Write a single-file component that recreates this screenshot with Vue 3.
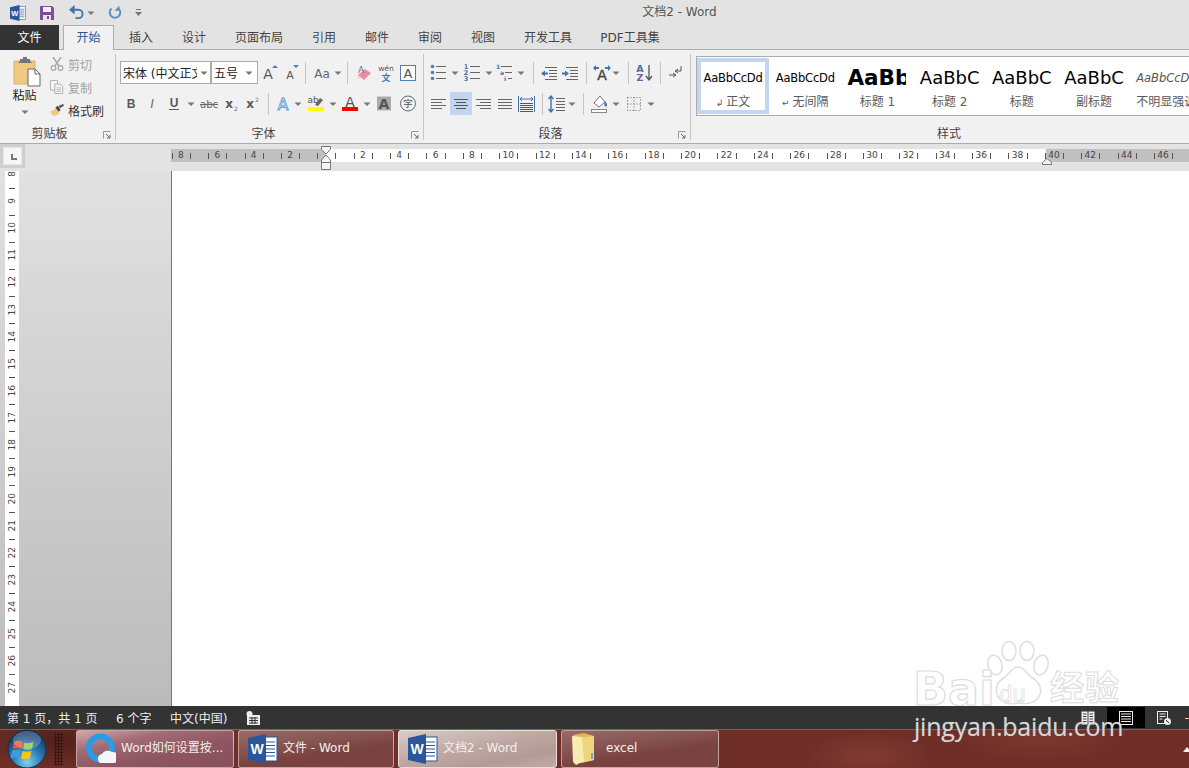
<script setup>
const tabs = [
  { t: '插入', w: 54 }, { t: '设计', w: 52 }, { t: '页面布局', w: 78 }, { t: '引用', w: 52 },
  { t: '邮件', w: 54 }, { t: '审阅', w: 52 }, { t: '视图', w: 54 }, { t: '开发工具', w: 76 }, { t: 'PDF工具集', w: 88 }
]
const c = (w) => ({ w, i: 'caret' })
const s = (w) => ({ w, sep: true })
const font1 = [
  { w: 21, i: 'grow' }, { w: 21, i: 'shrink' }, s(9), { w: 23, i: 'case' }, c(9), s(11),
  { w: 22, i: 'eraser' }, { w: 21, i: 'wen' }, { w: 23, i: 'abox' }
]
const font2 = [
  { w: 21, i: 'bold' }, { w: 22, i: 'ital' }, { w: 22, i: 'under' }, c(12), { w: 23, i: 'strike' },
  { w: 21, i: 'sub' }, { w: 22, i: 'sup' }, s(10), { w: 20, i: 'effect' }, c(10),
  { w: 26, i: 'hilite' }, c(8), { w: 26, i: 'fcolor' }, c(8), { w: 26, i: 'ashade' }, { w: 22, i: 'circle' }
]
const para1 = [
  { w: 22, i: 'bullets' }, c(12), { w: 22, i: 'numbers' }, c(12), { w: 20, i: 'multi' }, c(12), s(12),
  { w: 20, i: 'outdent' }, { w: 22, i: 'indent' }, s(10), { w: 22, i: 'asian' }, c(6), s(18),
  { w: 14, i: 'sort' }, s(18), { w: 12, i: 'pilcrow' }
]
const para2 = [
  { w: 22, i: 'alignl' }, { w: 22, i: 'alignc', on: true }, { w: 22, i: 'alignr' }, { w: 22, i: 'alignj' },
  { w: 22, i: 'alignd' }, s(8), { w: 22, i: 'spacing' }, c(8), s(14), { w: 20, i: 'fill' }, c(12),
  { w: 24, i: 'borders' }, c(10)
]
const styles = [
  { t: 'AaBbCcDd', l: '正文', m: '↲', k: 'sm', on: true },
  { t: 'AaBbCcDd', l: '无间隔', m: '↵', k: 'sm' },
  { t: 'AaBbCcDd', l: '标题 1', k: 'h1' },
  { t: 'AaBbC', l: '标题 2', k: 'h2' },
  { t: 'AaBbC', l: '标题', k: 'h2' },
  { t: 'AaBbC', l: '副标题', k: 'h2' },
  { t: 'AaBbCcDd', l: '不明显强调', k: 'em' }
]
const hcells = []
for (let n = -8; n <= 47; n++) hcells.push(n % 2 === 0 && n !== 0 ? Math.abs(n) : '')
const vcells = []
for (let n = 8; n <= 27; n++) vcells.push(n)
const tasks = [
  { t: 'Word如何设置按...', k: 'pink', i: 'browser', w: 158, ic: 30, gap: 5 },
  { t: '文件 - Word', k: 'plain', i: 'word', w: 156, ic: 30, gap: 5 },
  { t: '文档2 - Word', k: 'active', i: 'word', w: 159, ic: 30, gap: 5 },
  { t: 'excel', k: 'plain', i: 'folder', w: 158, ic: 26, gap: 9 }
]
</script>

<template>
  <div class="app">
    <svg class="defs" width="0" height="0" aria-hidden="true">
      <symbol id="word" viewBox="0 0 30 30">
        <rect x="15" y="3" width="14" height="24" fill="#fff" stroke="#2b579a" />
        <path d="M18 8h9M18 11.500h9M18 15h9M18 18.500h9M18 22h9" stroke="#2b579a" stroke-width="1.200" />
        <path d="M0 4 18 0v30L0 26z" fill="#2b579a" />
        <text x="9" y="20" text-anchor="middle" font-size="14" font-weight="700" fill="#fff" font-family="Liberation Sans">W</text>
      </symbol>
      <symbol id="save" viewBox="0 0 14 14">
        <path d="M0 0h12l2 2v12H0z" fill="#7d4e9e" />
        <rect x="3" y="1" width="8" height="5" fill="#f3eef7" />
        <rect x="3" y="9" width="8" height="5" fill="#e9e1ef" />
        <rect x="7" y="10" width="2" height="3" fill="#7d4e9e" />
      </symbol>
      <symbol id="undo" viewBox="0 0 16 16">
        <path d="M3 5h7a4.500 4.500 0 0 1 0 9H7" fill="none" stroke="#3f74ad" stroke-width="2" />
        <path d="M6 0v10L0 5z" fill="#3f74ad" />
      </symbol>
      <symbol id="redo" viewBox="0 0 16 16">
        <path d="M4 3.500a6 6 0 1 0 8 0" fill="none" stroke="#5b8fc4" stroke-width="2.200" />
        <path d="M13 0v6H7.500z" fill="#5b8fc4" />
      </symbol>
      <symbol id="qatm" viewBox="0 0 7 7">
        <path d="M1 0h5v1H1zM0 3h7L3.500 7z" fill="#777" />
      </symbol>
      <symbol id="caret" viewBox="0 0 20 20">
        <path d="M6.500 8.500h7L10 12z" fill="#777" />
      </symbol>
      <symbol id="paste" viewBox="0 0 28 30">
        <path d="M1 4h21v23H1z" fill="#efc981" stroke="#d9b06a" />
        <path d="M7 4V2h3V0h4v2h3v2l2 2H5z" fill="#757575" />
        <path d="M15 12h7l5 5v12H15z" fill="#fff" stroke="#666" />
        <path d="M22 12v5h5" fill="none" stroke="#666" />
      </symbol>
      <symbol id="scissors" viewBox="0 0 14 14">
        <path d="M3 0l6 9M11 0 5 9" stroke="#a9a9a9" stroke-width="1.500" fill="none" />
        <circle cx="3.500" cy="11" r="2.300" fill="none" stroke="#a9a9a9" stroke-width="1.300" />
        <circle cx="10.500" cy="11" r="2.300" fill="none" stroke="#a9a9a9" stroke-width="1.300" />
      </symbol>
      <symbol id="copy" viewBox="0 0 16 16">
        <path d="M.5.500h8v11h-8z" fill="#f5f5f5" stroke="#a8a8a8" />
        <path d="M5.500 4.500h6l3 3v8h-9z" fill="#f5f5f5" stroke="#a8a8a8" />
        <path d="M7.500 9h5M7.500 11h5M7.500 13h5" stroke="#b5b5b5" />
      </symbol>
      <symbol id="brush" viewBox="0 0 16 14">
        <path d="M0 9l7-4 4 6-7 3z" fill="#efc981" />
        <path d="M6 4l3-2 3 5-2 2z" fill="#444" />
        <path d="M10 2l5-2 1 2-5 3z" fill="#555" />
      </symbol>
      <symbol id="grow" viewBox="0 0 20 20">
        <text x="8" y="16" text-anchor="middle" font-size="14" fill="#555" font-family="DejaVu Sans">A</text>
        <path d="M12 5h6l-3-3z" fill="#4f7fb4" />
      </symbol>
      <symbol id="shrink" viewBox="0 0 20 20">
        <text x="9" y="16" text-anchor="middle" font-size="11" fill="#555" font-family="DejaVu Sans">A</text>
        <path d="M12 2h6l-3 3z" fill="#4f7fb4" />
      </symbol>
      <symbol id="case" viewBox="0 0 20 20">
        <text x="10" y="15" text-anchor="middle" font-size="12" fill="#666" font-family="DejaVu Sans">Aa</text>
      </symbol>
      <symbol id="eraser" viewBox="0 0 20 20">
        <path d="M4 12l7-6 6 4-7 7z" fill="#ea8ba0" />
        <path d="M4 12l3 4 3 1-6-2z" fill="#f3c3ce" />
        <text x="7" y="10" text-anchor="middle" font-size="9" fill="#777" font-family="DejaVu Sans">A</text>
      </symbol>
      <symbol id="wen" viewBox="0 0 20 20">
        <text x="10" y="8" text-anchor="middle" font-size="7.500" fill="#555" font-family="DejaVu Sans">wén</text>
        <text x="10" y="18" text-anchor="middle" font-size="9" font-weight="700" fill="#3f74ad" font-family="Noto Sans CJK SC">文</text>
      </symbol>
      <symbol id="abox" viewBox="0 0 20 20">
        <rect x="2.500" y="2.500" width="15" height="15" fill="#fff" stroke="#4f7fb4" />
        <text x="10" y="15" text-anchor="middle" font-size="13" fill="#555" font-family="DejaVu Sans">A</text>
      </symbol>
      <symbol id="bold" viewBox="0 0 20 20">
        <text x="10" y="14" text-anchor="middle" font-size="12" font-weight="700" fill="#5a5a5a" font-family="Liberation Sans">B</text>
      </symbol>
      <symbol id="ital" viewBox="0 0 20 20">
        <text x="10" y="14" text-anchor="middle" font-size="12.500" font-style="italic" fill="#666" font-family="Liberation Sans">I</text>
      </symbol>
      <symbol id="under" viewBox="0 0 20 20">
        <text x="10" y="13" text-anchor="middle" font-size="12" font-weight="700" fill="#5a5a5a" font-family="Liberation Sans">U</text>
        <path d="M5 15.500h10" stroke="#5a5a5a" />
      </symbol>
      <symbol id="strike" viewBox="0 0 20 20">
        <text x="10" y="13.500" text-anchor="middle" font-size="10" fill="#666" font-family="DejaVu Sans">abc</text>
        <path d="M1 10.500h18" stroke="#666" />
      </symbol>
      <symbol id="sub" viewBox="0 0 20 20">
        <text x="8" y="14" text-anchor="middle" font-size="12" font-weight="700" fill="#5a5a5a" font-family="DejaVu Sans">x</text>
        <text x="15" y="16.500" text-anchor="middle" font-size="6" fill="#3f74ad" font-family="DejaVu Sans">2</text>
      </symbol>
      <symbol id="sup" viewBox="0 0 20 20">
        <text x="8" y="14" text-anchor="middle" font-size="12" font-weight="700" fill="#5a5a5a" font-family="DejaVu Sans">x</text>
        <text x="15" y="8" text-anchor="middle" font-size="6" fill="#3f74ad" font-family="DejaVu Sans">2</text>
      </symbol>
      <symbol id="effect" viewBox="0 0 20 20">
        <text x="10" y="15.500" text-anchor="middle" font-size="16" fill="#eaf2fa" stroke="#5b96d2" stroke-width=".8" font-family="DejaVu Sans">A</text>
      </symbol>
      <symbol id="hilite" viewBox="0 0 20 20">
        <text x="7" y="9" text-anchor="middle" font-size="9" fill="#555" font-family="DejaVu Sans">ab</text>
        <path d="M9 11l5-7 3 2-5 6z" fill="#666" />
        <rect x="2" y="13" width="16" height="4" fill="#ffff00" />
      </symbol>
      <symbol id="fcolor" viewBox="0 0 20 20">
        <text x="10" y="12.500" text-anchor="middle" font-size="14" fill="#555" font-family="DejaVu Sans">A</text>
        <rect x="2" y="13" width="16" height="4" fill="#ff0000" />
      </symbol>
      <symbol id="ashade" viewBox="0 0 20 20">
        <rect x="3" y="2.500" width="14" height="14" fill="#ababab" />
        <text x="10" y="15" text-anchor="middle" font-size="14" font-weight="700" fill="#555" font-family="DejaVu Sans">A</text>
      </symbol>
      <symbol id="circle" viewBox="0 0 20 20">
        <circle cx="10" cy="9.500" r="7.500" fill="none" stroke="#666" />
        <text x="10" y="13" text-anchor="middle" font-size="9.500" fill="#555" font-family="Noto Sans CJK SC">字</text>
      </symbol>
      <symbol id="bullets" viewBox="0 0 20 20">
        <path d="M8 3.500h10M8 9.500h10M8 15.500h10" stroke="#666" />
        <circle cx="4.500" cy="3.500" r="1.800" fill="#4f7fb4" /><circle cx="4.500" cy="9.500" r="1.800" fill="#4f7fb4" /><circle cx="4.500" cy="15.500" r="1.800" fill="#4f7fb4" />
      </symbol>
      <symbol id="numbers" viewBox="0 0 20 20">
        <path d="M8 3.500h10M8 9.500h10M8 15.500h10" stroke="#666" />
        <text x="4" y="6" text-anchor="middle" font-size="6.500" font-weight="700" fill="#3f74ad" font-family="DejaVu Sans">1</text>
        <text x="4" y="12" text-anchor="middle" font-size="6.500" font-weight="700" fill="#3f74ad" font-family="DejaVu Sans">2</text>
        <text x="4" y="18" text-anchor="middle" font-size="6.500" font-weight="700" fill="#3f74ad" font-family="DejaVu Sans">3</text>
      </symbol>
      <symbol id="multi" viewBox="0 0 20 20">
        <path d="M6 3.500h11M10 9.500h7M13 15.500h4" stroke="#666" />
        <text x="3" y="6" text-anchor="middle" font-size="6" font-weight="700" fill="#3f74ad" font-family="DejaVu Sans">1</text>
        <text x="7" y="12" text-anchor="middle" font-size="6" font-weight="700" fill="#3f74ad" font-family="DejaVu Sans">a</text>
        <text x="10" y="18" text-anchor="middle" font-size="6" font-weight="700" fill="#3f74ad" font-family="DejaVu Sans">i</text>
      </symbol>
      <symbol id="outdent" viewBox="0 0 20 20">
        <path d="M6 4.500h12M10 7.500h8M10 10.500h8M10 13.500h8M6 16.500h12" stroke="#666" />
        <path d="M9 9.500H6v-2l-4 3 4 3v-2h3z" fill="#3f74ad" />
      </symbol>
      <symbol id="indent" viewBox="0 0 20 20">
        <path d="M6 4.500h12M10 7.500h8M10 10.500h8M10 13.500h8M6 16.500h12" stroke="#666" />
        <path d="M2 9.500h3v-2l4 3-4 3v-2H2z" fill="#3f74ad" />
      </symbol>
      <symbol id="asian" viewBox="0 0 20 20">
        <text x="10" y="17" text-anchor="middle" font-size="14" fill="#444" stroke="#444" stroke-width=".4" font-family="DejaVu Sans">A</text>
        <path d="M1 5l3-3v2h3v2H4v2zM19 5l-3-3v2h-3v2h3v2z" fill="#3f74ad" />
      </symbol>
      <symbol id="sort" viewBox="0 0 20 20">
        <text x="6" y="9" text-anchor="middle" font-size="9.500" font-weight="700" fill="#3f74ad" font-family="DejaVu Sans">A</text>
        <text x="6" y="18" text-anchor="middle" font-size="9.500" font-weight="700" fill="#8b4fa8" font-family="DejaVu Sans">Z</text>
        <path d="M15 2v14M12 13l3 4 3-4" stroke="#555" stroke-width="1.300" fill="none" />
      </symbol>
      <symbol id="pilcrow" viewBox="0 0 20 20">
        <path d="M16 3v5h-5M13 6l-3 2 3 2" stroke="#555" fill="none" />
        <path d="M4 12h6M8 10l3 2-3 2" stroke="#555" fill="none" />
      </symbol>
      <symbol id="alignl" viewBox="0 0 20 20">
        <path d="M2 5.500h15M2 8.500h11M2 11.500h15M2 14.500h11" stroke="#666" />
      </symbol>
      <symbol id="alignc" viewBox="0 0 20 20">
        <path d="M3 5.500h14M5 8.500h10M3 11.500h14M5 14.500h10" stroke="#555" />
      </symbol>
      <symbol id="alignr" viewBox="0 0 20 20">
        <path d="M3 5.500h15M7 8.500h11M3 11.500h15M7 14.500h11" stroke="#666" />
      </symbol>
      <symbol id="alignj" viewBox="0 0 20 20">
        <path d="M3 5.500h14M3 8.500h14M3 11.500h14M3 14.500h14" stroke="#666" />
      </symbol>
      <symbol id="alignd" viewBox="0 0 20 20">
        <path d="M1.500 2v16M17.500 2v16" stroke="#3f74ad" />
        <path d="M3 9.500h13M3 11.500h13M3 13.500h13M3 15.500h13M3 17.500h13" stroke="#555" />
        <path d="M3 5h13M5 3 3 5l2 2M14 3l2 2-2 2" stroke="#3f74ad" fill="none" />
      </symbol>
      <symbol id="spacing" viewBox="0 0 20 20">
        <path d="M9 4.500h9M9 7.500h9M9 10.500h9M9 13.500h9M9 16.500h9" stroke="#666" />
        <path d="M4 2v16M1.500 5 4 2l2.500 3M1.500 15 4 18l2.500-3" stroke="#3f74ad" stroke-width="1.400" fill="none" />
      </symbol>
      <symbol id="fill" viewBox="0 0 20 20">
        <path d="M4 9l6-7 5 6-6 5z" fill="#fff" stroke="#777" />
        <path d="M15 7c2 3 3 4 1 6-2-1-2-3-1-6z" fill="#3f74ad" />
        <rect x="1.500" y="15.500" width="15" height="3" fill="#fff" stroke="#888" />
      </symbol>
      <symbol id="borders" viewBox="0 0 20 20">
        <path d="M3.500 3.500h13v13h-13zM10 3.500v13M3.500 10h13" fill="none" stroke="#666" stroke-dasharray="1 2" />
      </symbol>
      <symbol id="launch" viewBox="0 0 8 8">
        <path d="M.5 7.500v-7h7" fill="none" stroke="#999" />
        <path d="M3 3l4 4M7 4v3H4" fill="none" stroke="#666" />
      </symbol>
      <symbol id="browser" viewBox="0 0 30 32">
        <circle cx="14.500" cy="15" r="11.500" fill="none" stroke="#2b9be8" stroke-width="6" />
        <path d="M14 30a5 5 0 0 1 2-9 7 7 0 0 1 10-2 5.500 5.500 0 0 1 2 11z" fill="#f4f7fb" />
      </symbol>
      <symbol id="folder" viewBox="0 0 26 32">
        <path d="M2 2 13 0l10 3 0 24-13 3z" fill="#d9b955" />
        <path d="M11 4l12-1v24l-13 3z" fill="#ecd67e" />
        <path d="M1 3l10 1 2 24-8 4-3-3z" fill="#f8edb0" />
        <rect x="20" y="20" width="2" height="6" fill="#6aa8d8" />
      </symbol>
      <symbol id="macro" viewBox="0 0 14 14">
        <circle cx="3.500" cy="3" r="3" fill="#eee" />
        <rect x="1" y="4" width="13" height="10" fill="#eee" />
        <path d="M3 7h9M3 9.500h9M3 12h9M6 6v7M9 6v7" stroke="#333" />
      </symbol>
      <symbol id="vread" viewBox="0 0 14 14">
        <path d="M.5.500h13v13H.5z" fill="#eee" />
        <path d="M7 0v14M2 3h3.500M2 5.500h3.500M2 8h3.500M2 10.500h3.500M8.500 3H12M8.500 5.500H12M8.500 8H12M8.500 10.500H12" stroke="#444" />
      </symbol>
      <symbol id="vprint" viewBox="0 0 14 14">
        <rect x=".5" y=".5" width="13" height="13" fill="#000" stroke="#eee" />
        <path d="M2 3h10M2 5.500h10M2 8h10M2 10.500h10" stroke="#eee" />
      </symbol>
      <symbol id="vweb" viewBox="0 0 14 14">
        <rect x=".5" y=".5" width="10" height="12" fill="#333" stroke="#eee" />
        <path d="M2.500 3h6M2.500 5.500h6M2.500 8h3" stroke="#eee" />
        <circle cx="10.500" cy="10.500" r="3.500" fill="#eee" />
        <path d="M9 9l3 3" stroke="#333" />
      </symbol>
    </svg>

    <header class="titlebar">
      <div class="qat">
        <svg class="i-word"><use href="#word" /></svg>
        <svg class="i-save"><use href="#save" /></svg>
        <svg class="i-undo"><use href="#undo" /></svg>
        <svg class="i-caret"><use href="#caret" /></svg>
        <svg class="i-redo"><use href="#redo" /></svg>
        <svg class="i-more"><use href="#qatm" /></svg>
      </div>
      <div class="doc-title">文档2 - Word</div>
    </header>

    <nav class="tabs">
      <div class="tab file">文件</div>
      <div class="tab active">开始</div>
      <div v-for="tab in tabs" :key="tab.t" class="tab" :style="{ width: tab.w + 'px' }">{{ tab.t }}</div>
    </nav>

    <section class="ribbon">
      <div class="group g1">
        <div class="group-body clip">
          <div class="paste">
            <svg class="i-paste"><use href="#paste" /></svg>
            <span class="paste-label">粘贴</span>
            <svg class="i-20"><use href="#caret" /></svg>
          </div>
          <div class="clip-list">
            <div class="clip-row off"><svg class="i-14"><use href="#scissors" /></svg>剪切</div>
            <div class="clip-row off"><svg class="i-14"><use href="#copy" /></svg>复制</div>
            <div class="clip-row"><svg class="i-14"><use href="#brush" /></svg>格式刷</div>
          </div>
        </div>
        <div class="group-label"><span>剪贴板</span><svg class="i-launch"><use href="#launch" /></svg></div>
      </div>

      <div class="group g2">
        <div class="group-body rows">
          <div class="row">
            <div class="combo name"><span class="combo-text">宋体 (中文正文)</span><svg class="i-20"><use href="#caret" /></svg></div>
            <div class="combo size"><span class="combo-text">五号</span><svg class="i-20"><use href="#caret" /></svg></div>
            <span v-for="(x, k) in font1" :key="k" class="cell" :class="{ sep: x.sep }" :style="{ width: x.w + 'px' }">
              <svg v-if="x.i" class="i-20"><use :href="'#' + x.i" /></svg>
            </span>
          </div>
          <div class="row">
            <span v-for="(x, k) in font2" :key="k" class="cell" :class="{ sep: x.sep }" :style="{ width: x.w + 'px' }">
              <svg v-if="x.i" class="i-20"><use :href="'#' + x.i" /></svg>
            </span>
          </div>
        </div>
        <div class="group-label"><span>字体</span><svg class="i-launch"><use href="#launch" /></svg></div>
      </div>

      <div class="group g3">
        <div class="group-body rows">
          <div class="row">
            <span v-for="(x, k) in para1" :key="k" class="cell" :class="{ sep: x.sep }" :style="{ width: x.w + 'px' }">
              <svg v-if="x.i" class="i-20"><use :href="'#' + x.i" /></svg>
            </span>
          </div>
          <div class="row shift">
            <span v-for="(x, k) in para2" :key="k" class="cell" :class="{ sep: x.sep, on: x.on }" :style="{ width: x.w + 'px' }">
              <svg v-if="x.i" class="i-20"><use :href="'#' + x.i" /></svg>
            </span>
          </div>
        </div>
        <div class="group-label"><span>段落</span><svg class="i-launch"><use href="#launch" /></svg></div>
      </div>

      <div class="group g4">
        <div class="gallery">
          <div v-for="st in styles" :key="st.l" class="style-item" :class="{ on: st.on }">
            <div class="style-sample" :class="st.k">{{ st.t }}</div>
            <div class="style-label"><span v-if="st.m" class="mark">{{ st.m }}</span>{{ st.l }}</div>
          </div>
        </div>
        <div class="group-label styles-label"><span>样式</span></div>
      </div>
    </section>

    <main class="workspace">
      <div class="ruler-row">
        <div class="corner-slot">
          <div class="corner"><span class="corner-mark"></span></div>
        </div>
        <div class="hruler">
          <span v-for="(n, k) in hcells" :key="k" class="hcell">{{ n }}</span>
          <svg class="indent-left" width="10" height="25" viewBox="0 0 10 25">
            <path d="M.5.500h9v3L5 8 .5 3.500zM5 9l4.500 5v9.500h-9V14z" fill="#f4f4f4" stroke="#777" />
            <path d="M.5 16.500h9" stroke="#777" />
          </svg>
          <svg class="indent-right" width="10" height="7" viewBox="0 0 10 7">
            <path d="M5 .5l4.500 4v2h-9v-2z" fill="#f4f4f4" stroke="#777" />
          </svg>
        </div>
      </div>
      <div class="doc-row">
        <div class="side">
          <div class="vruler">
            <span v-for="n in vcells" :key="n" class="vcell"><b>{{ n }}</b></span>
          </div>
        </div>
        <div class="page"></div>
      </div>
    </main>

    <footer class="status">
      <span class="st s1">第 1 页，共 1 页</span>
      <span class="st s2">6 个字</span>
      <span class="st s3">中文(中国)</span>
      <svg class="i-14"><use href="#macro" /></svg>
      <div class="views">
        <span class="view"><svg class="i-14"><use href="#vread" /></svg></span>
        <span class="view on"><svg class="i-14"><use href="#vprint" /></svg></span>
        <span class="view"><svg class="i-14"><use href="#vweb" /></svg></span>
        <span class="view-end">-</span>
      </div>
    </footer>

    <div class="taskbar">
      <div class="orb">
        <svg width="40" height="40" viewBox="0 0 40 40">
          <defs>
            <radialGradient id="orbg" cx="50%" cy="85%" r="75%">
              <stop offset="0" stop-color="#7fd0ee" /><stop offset=".5" stop-color="#2a7db8" /><stop offset="1" stop-color="#123a68" />
            </radialGradient>
          </defs>
          <circle cx="20" cy="20" r="19" fill="url(#orbg)" stroke="#1d2f45" />
          <path d="M7 13c3-2 6-1 9 0l-1.500 7c-3-1-6-1-9 0z" fill="#e8552f" />
          <path d="M17.500 13.500c3 1 6 1 9-1L25 20c-3 1.500-6 1.500-9 0z" fill="#8cc63f" />
          <path d="M5 21.500c3-1 6-1 9 0L12.500 29c-3-1-6-1-9 .5z" fill="#3f9be0" />
          <path d="M15.500 22c3 1 6 1 9-.5L23 29c-3 1.500-6 1.500-9 .5z" fill="#f5c518" />
          <ellipse cx="20" cy="11" rx="14" ry="9" fill="#fff" opacity=".22" />
        </svg>
      </div>
      <div class="grip"></div>
      <div class="tasks">
        <div v-for="t in tasks" :key="t.t" class="task" :class="t.k" :style="{ width: t.w + 'px' }">
          <svg class="task-ic" :style="{ width: t.ic + 'px', marginRight: t.gap + 'px' }"><use :href="'#' + t.i" /></svg>
          <span class="task-text">{{ t.t }}</span>
        </div>
      </div>
      <div class="tray-tri"></div>
    </div>

    <div class="watermark">
      <svg class="paw" width="68" height="68" viewBox="0 0 68 68">
        <g fill="none" stroke="#dedede" stroke-width="1.500">
          <ellipse cx="10" cy="24" rx="7" ry="10" transform="rotate(-15 10 24)" />
          <ellipse cx="24" cy="10" rx="7" ry="9.500" />
          <ellipse cx="42" cy="10" rx="7" ry="9.500" />
          <ellipse cx="56" cy="24" rx="7" ry="10" transform="rotate(15 56 24)" />
          <path d="M33 26c-6 0-8 6-13 10-7 4-10 10-8 17 3 9 12 11 21 9 9 2 19 0 22-9 2-7-2-13-9-17-5-4-7-10-13-10z" />
        </g>
      </svg>
      <span class="wm-bai">Bai</span>
      <span class="wm-du">du</span>
      <span class="wm-jy">经验</span>
      <span class="wm-url">jingyan.baidu.com</span>
    </div>
  </div>
</template>

<style>
html, body { margin: 0; padding: 0; overflow: hidden; }
</style>

<style scoped>
.app {
  position: relative;
  width: 1189px;
  height: 768px;
  overflow: hidden;
  display: flex;
  flex-direction: column;
  font-family: "DejaVu Sans", "Noto Sans CJK SC", sans-serif;
  font-size: 12px;
  color: #444;
  background: #e3e3e3;
}
.defs { display: none; }
svg { flex: none; overflow: visible; display: block; }

.titlebar { height: 25px; display: flex; align-items: center; flex: none; background: #e3e3e3; }
.qat { display: flex; align-items: center; padding-left: 10px; }
.i-word { width: 16px; height: 16px; }
.i-save { width: 14px; height: 14px; margin-left: 14px; }
.i-undo { width: 15px; height: 15px; margin-left: 15px; }
.i-caret { width: 20px; height: 20px; margin-left: -3px; margin-right: -4px; }
.i-redo { width: 14px; height: 15px; margin-left: 11px; }
.i-more { width: 7px; height: 7px; margin-left: 13px; }
.doc-title { flex: 1; text-align: center; color: #555; font-size: 12px; padding-left: 28px; margin-top: -4px; }

.tabs { height: 25px; flex: none; display: flex; box-sizing: border-box; border-bottom: 1px solid #ababab; background: #e3e3e3; }
.tab { height: 25px; padding-bottom: 3px; box-sizing: border-box; display: flex; align-items: center; justify-content: center; font-size: 12px; color: #444; flex: none; }
.tab.file { width: 59px; background: #333; color: #fff; margin-right: 4px; }
.tab.active { width: 51px; background: #f1f1f1; border: 1px solid #ababab; border-bottom: 0; color: #2b579a; }

.ribbon { height: 94px; flex: none; box-sizing: border-box; background: #f1f1f1; border-bottom: 1px solid #ababab; padding: 4px 0 3px; display: flex; }
.group { display: flex; flex-direction: column; box-sizing: border-box; border-right: 1px solid #c6c6c6; flex: none; height: 86px; }
.g1 { width: 116px; }
.g2 { width: 308px; padding-left: 4px; }
.g3 { width: 267px; padding-left: 3px; }
.g4 { flex: 1; border-right: 0; padding-left: 5px; min-width: 0; }
.group-body { flex: 1; min-height: 0; }
.group-label { margin-top: auto; height: 12px; line-height: 12px; display: flex; align-items: center; color: #444; }
.group-label span { flex: 1; text-align: center; }
.i-launch { width: 8px; height: 8px; margin: 2px 4px 0 4px; }
.styles-label { padding-left: 13px; }

.clip { display: flex; }
.paste { width: 49px; display: flex; flex-direction: column; align-items: center; padding-top: 3px; }
.i-paste { width: 28px; height: 30px; margin-left: 5px; }
.paste-label { margin-top: 1px; color: #222; line-height: 17px; }
.paste .i-20 { margin-top: -3px; }
.i-20 { width: 20px; height: 20px; }
.i-14 { width: 14px; height: 14px; }
.clip-list { margin-top: -1.500px; display: flex; flex-direction: column; }
.clip-row { height: 23px; display: flex; align-items: center; gap: 4px; color: #333; }
.clip-row .i-14 { margin-left: 1px; }
.clip-row.off { color: #a3a3a3; }

.rows { padding-top: 7px; display: flex; flex-direction: column; gap: 8px; }
.row { height: 23px; display: flex; align-items: center; }
.row.shift { margin-left: 1px; }
.cell { height: 23px; display: flex; align-items: center; justify-content: center; flex: none; }
.cell.on { background: #c2d5f2; }
.cell.sep::after { content: ""; width: 1px; height: 22px; background: #c6c6c6; }
.combo { height: 23px; box-sizing: border-box; background: #fff; border: 1px solid #ababab; display: flex; align-items: center; flex: none; color: #222; }
.combo.name { width: 91px; padding-left: 2px; }
.combo.size { width: 47px; padding-left: 2px; margin-right: 1px; }
.combo-text { overflow: hidden; white-space: nowrap; min-width: 0; flex: 1; }
.combo.size .i-20 { margin-right: -2px; }
.combo.name .combo-text { flex: none; width: 74px; }
.combo.name .i-20 { margin-left: -3px; }

.gallery { height: 60px; margin-top: 2px; box-sizing: border-box; border: 1px solid #ababab; border-right: 0; background: #fff; display: flex; padding-top: 1px; flex: none; overflow: hidden; }
.style-item { width: 72.200px; height: 56px; box-sizing: border-box; flex: none; text-align: center; overflow: hidden; display: flex; flex-direction: column; align-items: center; padding: 4px 3px 0; }
.style-item.on { border: 4px solid #c2d5f2; padding: 0; }
.style-sample { height: 32px; line-height: 32px; white-space: nowrap; color: #000; font-family: "DejaVu Sans", sans-serif; width: 100%; overflow: hidden; flex: none; }
.style-sample.sm { font-size: 11.500px; letter-spacing: -.2px; }
.style-sample.h1 { font-size: 21.500px; font-weight: 700; text-align: left; padding-left: 3px; width: 62px; box-sizing: border-box; align-self: flex-start; }
.style-sample.h2 { font-size: 18px; }
.style-sample.em { font-size: 11.500px; font-style: italic; color: #555; text-align: left; padding-left: 3px; box-sizing: border-box; }
.style-label { white-space: nowrap; color: #5a5a5a; line-height: 16px; }
.mark { font-size: 9px; margin-right: 3px; }

.workspace { flex: 1; min-height: 0; display: flex; flex-direction: column; background: linear-gradient(180deg, #e3e3e3 0%, #bbb 100%); }
.ruler-row { height: 27px; display: flex; flex: none; background: #e3e3e3; }
.corner-slot { width: 171px; flex: none; }
.corner { width: 25px; height: 24px; background: #cfcfcf; box-sizing: border-box; padding: 3px; display: flex; }
.corner > .corner-mark { flex: 1; background: #f6f6f6; border: 1px solid #e6e6e6; position: relative; }
.corner-mark::after { content: ""; position: absolute; left: 7px; top: 6px; width: 4px; height: 4px; border-left: 2px solid #777; border-bottom: 2px solid #777; }
.hruler {
  position: relative;
  flex: 1;
  height: 13px;
  margin-top: 5px;
  padding-left: .8px;
  display: flex;
  background: linear-gradient(90deg, #c0c0c0 155px, #fff 155px, #fff 875px, #c0c0c0 875px);
}
.hcell {
  width: 18.200px;
  flex: none;
  text-align: center;
  font: 9px/13px "DejaVu Sans", sans-serif;
  color: #444;
  background: linear-gradient(#555, #555) left center / 1px 6px no-repeat;
}
.indent-left { position: absolute; left: 150px; top: -3px; }
.indent-right { position: absolute; left: 871px; top: 9px; }

.doc-row { flex: 1; min-height: 0; display: flex; }
.side { width: 172px; flex: none; box-sizing: border-box; border-right: 1px solid #777; padding-left: 5px; }
.vruler { width: 14px; height: 100%; background: #fff; overflow: hidden; display: flex; flex-direction: column; }
.vcell {
  height: 27.050px;
  flex: none;
  display: flex;
  align-items: center;
  justify-content: center;
  background: linear-gradient(#555, #555) center top / 6px 1px no-repeat;
}
.vcell:first-child { margin-top: -10.500px; }
.vcell b { font: 9px/13px "DejaVu Sans", sans-serif; color: #444; writing-mode: vertical-rl; transform: rotate(180deg); }
.page { flex: 1; background: #fff; }

.status { height: 23px; flex: none; background: #333; color: #eee; display: flex; align-items: center; padding-left: 7px; }
.st { white-space: nowrap; flex: none; }
.s1 { width: 109px; }
.s2 { width: 54px; }
.s3 { width: 76px; }
.views { margin-left: auto; display: flex; align-items: center; height: 21px; }
.view { width: 38px; height: 21px; display: flex; align-items: center; justify-content: center; }
.view.on { background: #000; }
.view-end { width: 6px; text-align: right; color: #eee; }

.taskbar {
  height: 39px;
  flex: none;
  display: flex;
  align-items: center;
  box-sizing: border-box;
  border-top: 1px solid #8f5a54;
  background:
    radial-gradient(60px 24px at 870px 26px, rgba(150, 70, 60, .5), transparent),
    radial-gradient(80px 20px at 1040px 10px, rgba(150, 70, 60, .35), transparent),
    radial-gradient(90px 30px at 60px 10px, rgba(40, 10, 8, .4), transparent),
    #6f2f28;
}
.orb { width: 54px; flex: none; display: flex; padding-left: 7px; box-sizing: border-box; }
.grip { width: 9px; height: 32px; flex: none; background: radial-gradient(circle, #2e120e 0.9px, transparent 1.2px) 0 0 / 3px 3px; }
.tasks { display: flex; gap: 4px; margin-left: 13px; }
.task {
  height: 38px;
  flex: none;
  box-sizing: border-box;
  border: 1px solid rgba(235, 215, 210, .6);
  border-radius: 3px;
  display: flex;
  align-items: center;
  padding-left: 9px;
  color: #f5efee;
  font-size: 12px;
  white-space: nowrap;
  background: linear-gradient(172deg, rgba(255, 255, 255, .22) 0, rgba(255, 255, 255, .06) 45%, transparent 60%), #7a4340;
}
.task.pink { background: linear-gradient(168deg, #d0a9ae 0, #a16a74 30%, #8e5660 60%, #87505a 100%); }
.task.active { background: linear-gradient(168deg, #dacac6 0, #bda6a1 50%, #b49a95 75%, #c2aca8 100%); border-color: #e8dedc; }
.task-ic { height: 32px; flex: none; }
.task-text { line-height: 16px; margin-top: -3px; }
.tray-tri { margin-left: auto; width: 0; height: 0; border: 4px solid transparent; border-bottom: 5px solid #f0f0f0; border-top: 0; margin-right: -2px; }

.watermark { position: absolute; left: 0; top: 0; width: 1189px; height: 768px; pointer-events: none; }
.paw { position: absolute; left: 985px; top: 641px; }
.wm-bai { position: absolute; left: 913px; top: 659px; font: 700 46px/60px "DejaVu Sans", sans-serif; color: rgba(255, 255, 255, .8); -webkit-text-stroke: 1.200px #dcdcdc; }
.wm-du { position: absolute; left: 999px; top: 674px; font: 400 24px/40px "Liberation Sans", sans-serif; color: #fff; -webkit-text-stroke: .6px #d4d4d4; }
.wm-jy { position: absolute; left: 1050px; top: 664px; font: 700 34px/44px "Noto Sans CJK SC", sans-serif; color: #fff; -webkit-text-stroke: 1px #dcdcdc; letter-spacing: 1px; }
.wm-url { position: absolute; left: 914px; top: 708px; font: 400 25px/36px "Open Sans", sans-serif; color: rgba(235, 235, 235, .85); text-shadow: 0 0 1px #777; letter-spacing: -.2px; }
</style>
